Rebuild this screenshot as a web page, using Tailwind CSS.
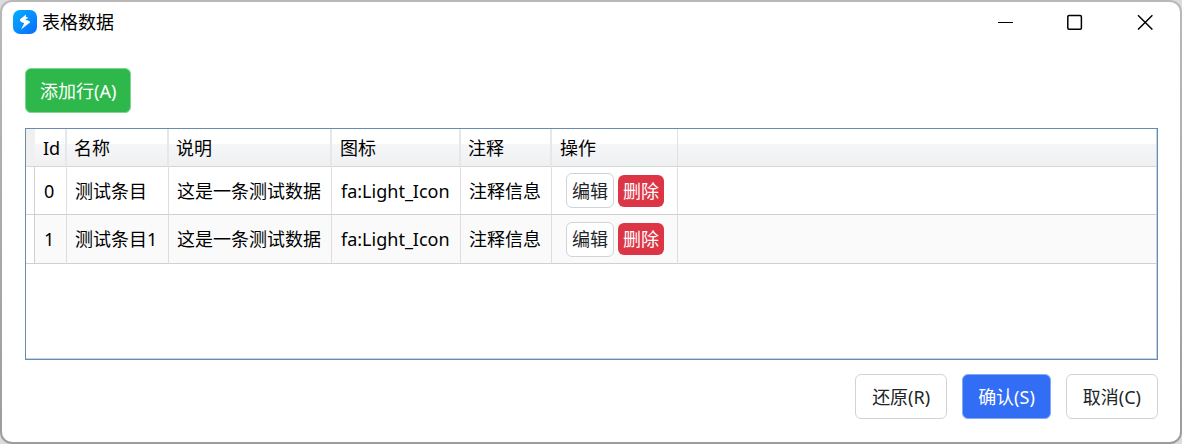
<!DOCTYPE html>
<html lang="zh-CN">
  <head>
    <meta charset="UTF-8" />
    <meta name="viewport" content="width=device-width, initial-scale=1.0" />
    <title>表格数据</title>
    <script src="https://cdn.jsdelivr.net/npm/@tailwindcss/browser@4"></script>
  </head>
  <body
    class="bg-[#dcdcdc] font-['Noto_Sans','Noto_Sans_CJK_SC',sans-serif] text-lg leading-6 text-black"
  >
    <!-- Window frame -->
    <div
      class="min-h-screen flex flex-col rounded-xl bg-linear-to-b from-[#b9b9b9] to-[#9c9c9c] p-[2px]"
    >
      <div class="flex-1 flex flex-col rounded-[10px] bg-white">
        <!-- Title bar -->
        <header class="flex items-center justify-between h-10 pl-[11px]">
          <div class="flex items-center gap-[5px]">
            <svg class="size-6" viewBox="0 0 24 24">
              <defs>
                <linearGradient id="logo" x1="0" y1="0" x2="1" y2="1">
                  <stop offset="0" stop-color="#00b0ff" />
                  <stop offset="1" stop-color="#0a6cff" />
                </linearGradient>
              </defs>
              <rect width="24" height="24" rx="7" fill="url(#logo)" />
              <path
                d="M13 4.6L6.8 9.6L7.6 11.8L11.2 13.2L8 19.6L17 12.6L16.4 11L12.4 9.8L15.4 7.8L12.8 7Z"
                fill="#fff"
              />
            </svg>
            <h1>表格数据</h1>
          </div>
          <div class="flex items-center">
            <button aria-label="最小化" class="w-[70px] flex justify-center">
              <svg class="size-4" viewBox="0 0 16 16" stroke="#000">
                <path d="M1 8.5H16" />
              </svg>
            </button>
            <button aria-label="最大化" class="w-[70px] flex justify-center">
              <svg class="size-4" viewBox="0 0 16 16" fill="none" stroke="#000">
                <rect x="0.8" y="1.6" width="13.6" height="13.6" rx="1.2" stroke-width="1.5" />
              </svg>
            </button>
            <button aria-label="关闭" class="w-[70px] flex justify-center">
              <svg class="size-4" viewBox="0 0 16 16" stroke="#000">
                <path d="M1 1.2L15.4 15.6M15.4 1.2L1 15.6" stroke-width="1.4" />
              </svg>
            </button>
          </div>
        </header>

        <main class="flex-1 flex flex-col pl-[23px] pr-[22px] pt-[26px] pb-[23px]">
          <div class="flex">
            <button
              class="h-[45px] px-[14px] rounded-md border border-[#7fd592] bg-[#2eb84c] text-white"
            >
              添加行(A)
            </button>
          </div>

          <!-- Data grid -->
          <div
            class="flex-1 mt-[15px] border border-[#688caf] shadow-[inset_-1px_-1px_0_#c3d3e3]"
          >
            <table class="w-full table-fixed border-separate border-spacing-0 text-left pr-px">
              <colgroup>
                <col class="w-[9px]" />
                <col class="w-8" />
                <col class="w-[102px]" />
                <col class="w-[163px]" />
                <col class="w-[129px]" />
                <col class="w-[91px]" />
                <col class="w-[126px]" />
                <col />
              </colgroup>
              <thead>
                <tr
                  class="h-[38px] bg-linear-to-b from-white from-40% via-[#f5f6f7] via-40% to-[#eef0f2] *:font-normal *:border-b *:border-b-[#d5d5d5]"
                >
                  <td class="bg-[#f0f0f0]"></td>
                  <th class="pl-2 border-r-2 border-r-[#e6e7e9]">Id</th>
                  <th class="pl-[7px] border-r-2 border-r-[#e6e7e9]">名称</th>
                  <th class="pl-[7px] border-r-2 border-r-[#e6e7e9]">说明</th>
                  <th class="pl-2 border-r-2 border-r-[#e6e7e9]">图标</th>
                  <th class="pl-[7px] border-r-2 border-r-[#e6e7e9]">注释</th>
                  <th class="pl-2 border-r border-r-[#e0e1e3]">操作</th>
                  <td></td>
                </tr>
              </thead>
              <tbody>
                <tr class="h-12 *:border-b *:border-b-[#d0d0d0]">
                  <td class="border-r border-r-[#d0d0d0]"></td>
                  <td class="pl-[9px] border-r border-r-[#dedede]">0</td>
                  <td class="pl-2 border-r border-r-[#dedede]">测试条目</td>
                  <td class="pl-2 border-r border-r-[#dedede]">这是一条测试数据</td>
                  <td class="pl-[9px] border-r border-r-[#dedede]">fa:Light_Icon</td>
                  <td class="pl-2 border-r border-r-[#dedede]">注释信息</td>
                  <td class="pl-[14px] border-r border-r-[#dedede]">
                    <div class="flex items-center gap-1">
                      <button
                        class="h-[35px] px-[5px] rounded-md border border-[#ced4da] bg-white text-[#212529]"
                      >
                        编辑
                      </button>
                      <button class="h-8 px-[5px] rounded-md bg-[#dc3545] text-white">
                        删除
                      </button>
                    </div>
                  </td>
                  <td></td>
                </tr>
                <tr class="h-[49px] bg-[#fafafa] *:border-b *:border-b-[#d0d0d0]">
                  <td class="bg-white border-r border-r-[#d0d0d0]"></td>
                  <td class="pl-[9px] border-r border-r-[#dedede]">1</td>
                  <td class="pl-2 border-r border-r-[#dedede]">测试条目1</td>
                  <td class="pl-2 border-r border-r-[#dedede]">这是一条测试数据</td>
                  <td class="pl-[9px] border-r border-r-[#dedede]">fa:Light_Icon</td>
                  <td class="pl-2 border-r border-r-[#dedede]">注释信息</td>
                  <td class="pl-[14px] border-r border-r-[#dedede]">
                    <div class="flex items-center gap-1">
                      <button
                        class="h-[35px] px-[5px] rounded-md border border-[#ced4da] bg-white text-[#212529]"
                      >
                        编辑
                      </button>
                      <button class="h-8 px-[5px] rounded-md bg-[#dc3545] text-white">
                        删除
                      </button>
                    </div>
                  </td>
                  <td></td>
                </tr>
              </tbody>
            </table>
          </div>

          <!-- Dialog actions -->
          <div class="mt-[14px] flex justify-end gap-[15px]">
            <button
              class="h-[45px] px-4 rounded-md border border-[#ced4da] bg-white text-[#212529]"
            >
              还原(R)
            </button>
            <button
              class="h-[45px] px-[15px] rounded-md border border-[#84a9f8] bg-[#326df5] text-white"
            >
              确认(S)
            </button>
            <button
              class="h-[45px] px-4 rounded-md border border-[#ced4da] bg-white text-[#212529]"
            >
              取消(C)
            </button>
          </div>
        </main>
      </div>
    </div>
  </body>
</html>
